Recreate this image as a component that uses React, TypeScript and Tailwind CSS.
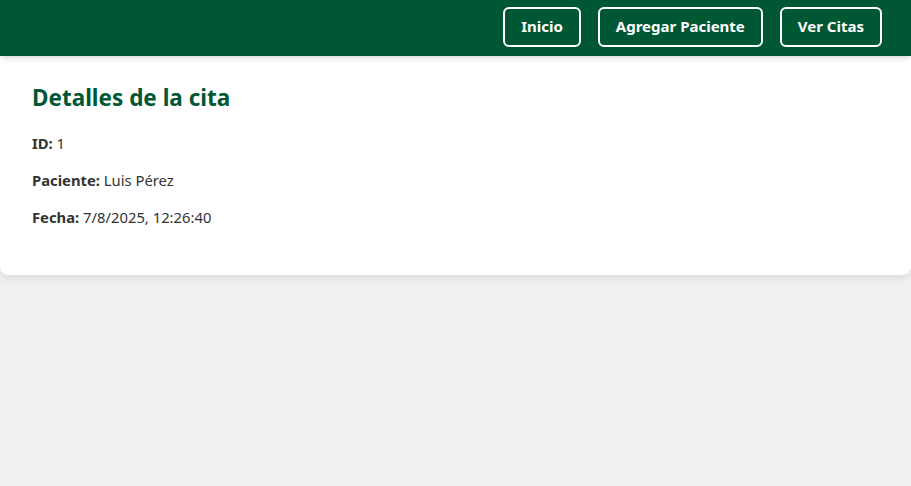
import React from "react";

const NavButton = ({ label }: { label: string }) => (
    <button
        type="button"
        className="h-10 px-[16px] border-2 border-white rounded-md text-white text-[15px] font-bold"
    >
        {label}
    </button>
);

const App = () => {
    return (
        <div
            className="min-h-screen bg-[#f0f0f0] text-[#333]"
            style={{ fontFamily: '"Noto Sans", sans-serif' }}
        >
            {/* barra superior */}
            <nav className="h-14 bg-[#005734] flex items-center justify-end gap-[17px] pr-[29px] pb-[3px] shadow-md relative z-10">
                <NavButton label="Inicio" />
                <NavButton label="Agregar Paciente" />
                <NavButton label="Ver Citas" />
            </nav>

            <div className="bg-white rounded-b-lg shadow-[0_2px_10px_rgba(0,0,0,0.1)] px-8 pt-[25px] pb-[47px]">
                <h2 className="text-[22.5px] font-bold text-[#005734] mb-[17px]">
                    Detalles de la cita
                </h2>
                <div className="flex flex-col gap-[15px] text-[14.8px]">
                    <p>
                        <strong>ID:</strong> 1
                    </p>
                    <p>
                        <strong>Paciente:</strong> Luis Pérez
                    </p>
                    <p>
                        <strong>Fecha:</strong> 7/8/2025, 12:26:40
                    </p>
                </div>
            </div>
        </div>
    );
};

export default App;
